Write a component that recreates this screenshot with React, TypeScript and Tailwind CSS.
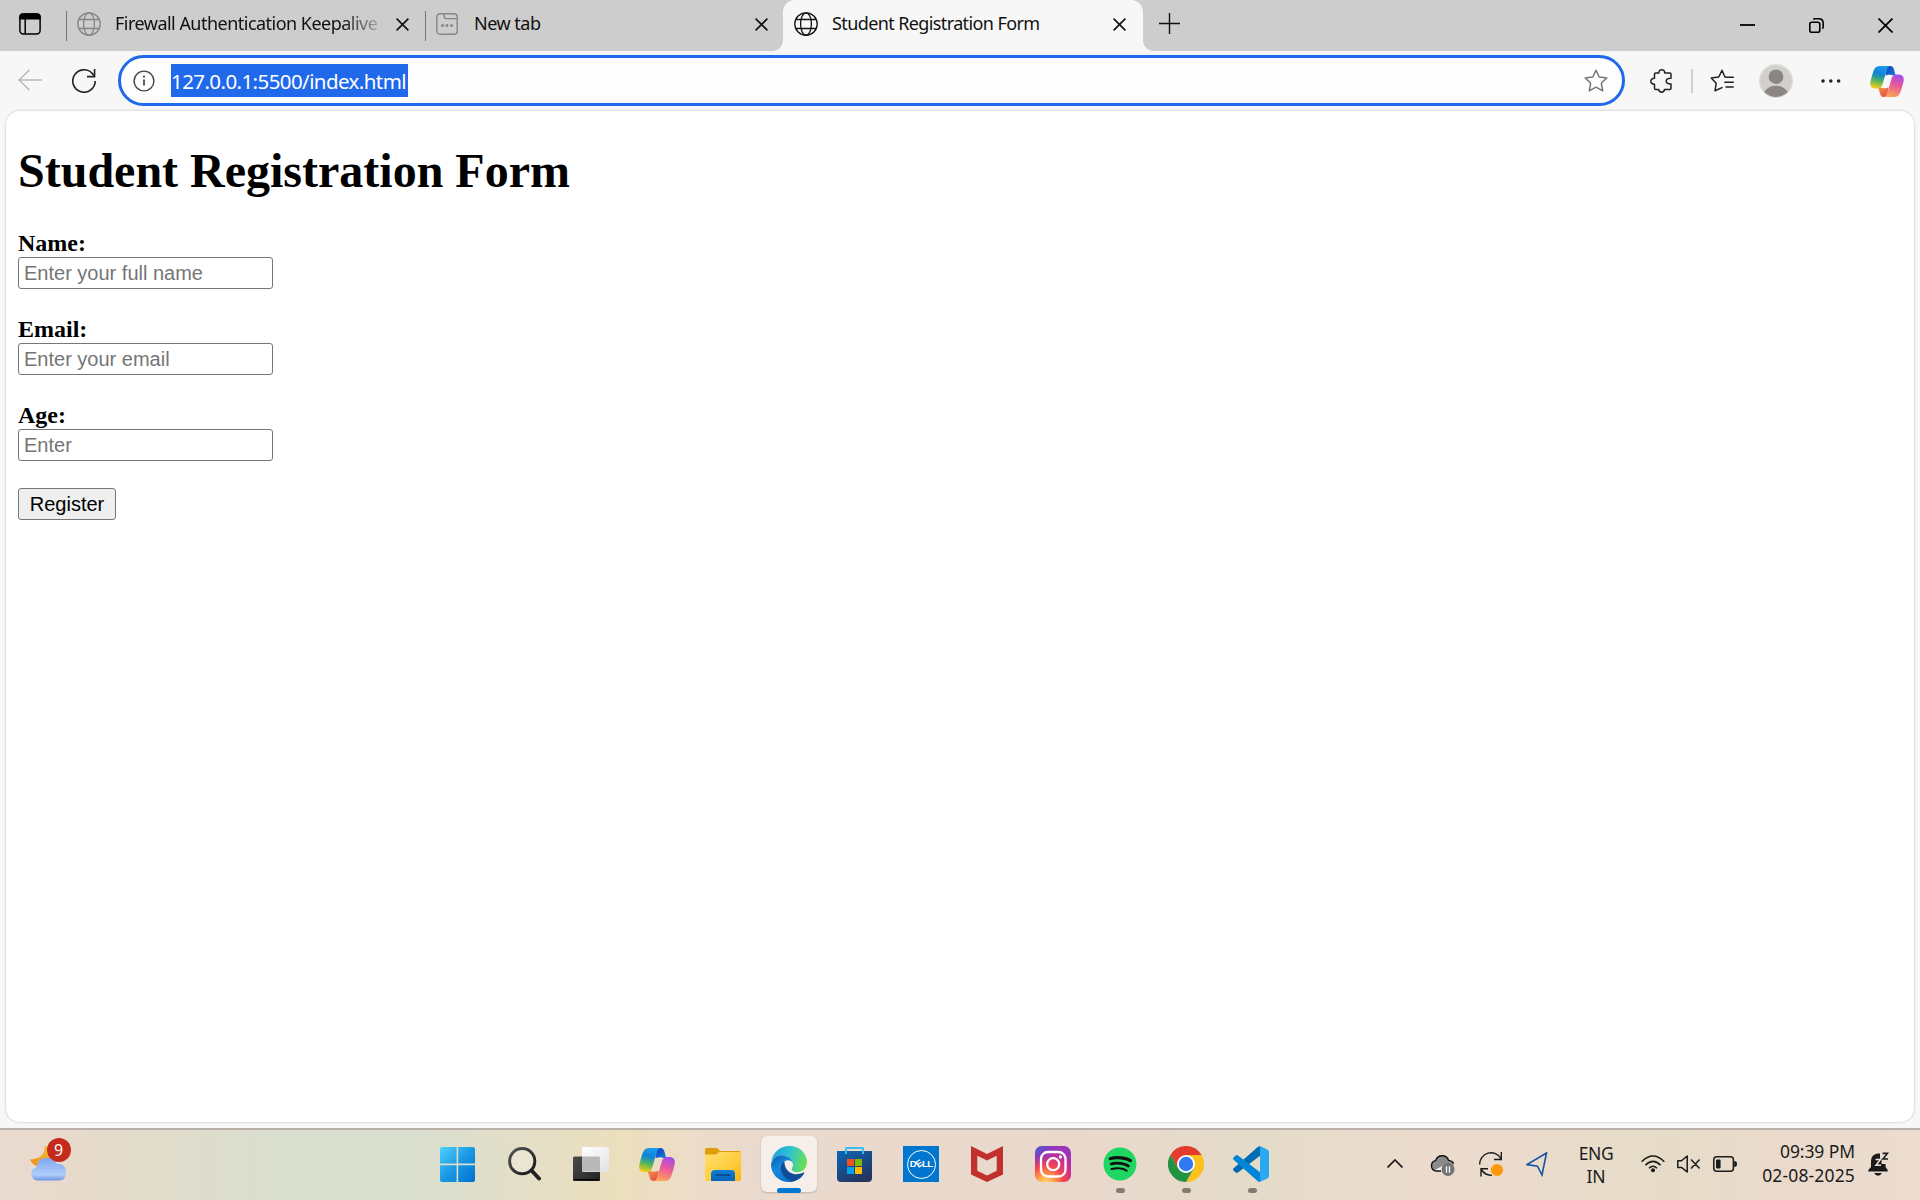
import React from "react";
import { FaSpotify } from "react-icons/fa";

type Cls = { className?: string };

const Globe = ({ className = "" }: Cls) => (
  <svg viewBox="0 0 24 24" className={"h-6 w-6 shrink-0 " + className} fill="none" stroke="currentColor" strokeWidth="1.3">
    <circle cx="12" cy="12" r="11.2" />
    <ellipse cx="12" cy="12" rx="5.4" ry="11.2" />
    <path d="M1.8 7.5H22.2M1.8 16.5H22.2" />
  </svg>
);

const Cross = ({ className = "" }: Cls) => (
  <svg viewBox="0 0 13 13" className={"h-[13px] w-[13px] shrink-0 " + className} fill="none" stroke="#111" strokeWidth="1.6">
    <path d="M.6 .6L12.4 12.4M12.4 .6L.6 12.4" />
  </svg>
);

const Copilot = ({ className = "", id }: Cls & { id: string }) => (
  <svg viewBox="0 0 36 33" className={"shrink-0 " + className}>
    <defs>
      <linearGradient id={id + "a"} x1="0.5" y1="0" x2="0.3" y2="1">
        <stop offset="0" stopColor="#1a9ae8" />
        <stop offset=".35" stopColor="#0f83d8" />
        <stop offset=".65" stopColor="#52b45f" />
        <stop offset="1" stopColor="#f8cf10" />
      </linearGradient>
      <linearGradient id={id + "b"} x1="0.7" y1="0" x2="0.4" y2="1">
        <stop offset="0" stopColor="#a04df0" />
        <stop offset=".45" stopColor="#e9579c" />
        <stop offset="1" stopColor="#ffa456" />
      </linearGradient>
      <linearGradient id={id + "c"} x1="0" y1="0" x2="1" y2="1">
        <stop offset="0" stopColor="#123bb8" />
        <stop offset="1" stopColor="#1783e8" />
      </linearGradient>
      <linearGradient id={id + "d"} x1="0" y1="0" x2="1" y2="1">
        <stop offset="0" stopColor="#f7a23b" />
        <stop offset="1" stopColor="#e43d52" />
      </linearGradient>
    </defs>
    <path d="M18 0H21.5C23.5 0 24.6 1 25.2 3L26.8 8.5C27.2 9.7 27.8 10 29 10H24.5Q22 8.8 19.5 9.4L16.4 10Z" fill={`url(#${id}c)`} />
    <path d="M18 33H14.5C12.5 33 11.4 32 10.8 30L9.2 25C8.8 23.6 8 23.2 6.5 23H11.5Q14 24.2 16.5 23.6L19.6 23Z" fill={`url(#${id}d)`} />
    <path d="M10.5 0H22C19.5 0 18.4 2 17.6 4.8L13.2 19.5C12.4 22.2 11 24 8 24H5.2C1 24 -.6 20.5 .4 16.5C1.4 12 2.6 8 4 4.3C5.2 1.4 7.4 0 10.5 0Z" fill={`url(#${id}a)`} />
    <path d="M25.5 33H14C16.5 33 17.6 31 18.4 28.2L22.8 13.5C23.6 10.8 25 9 28 9H30.8C35 9 36.6 12.5 35.6 16.5C34.6 21 33.4 25 32 28.7C30.8 31.6 28.6 33 25.5 33Z" fill={`url(#${id}b)`} />
  </svg>
);

const TabSep = ({ className = "" }: Cls) => <div className={"h-[30px] w-px shrink-0 bg-[#777] " + className} />;

function TabBar() {
  return (
    <div className="flex h-[51px] shrink-0 bg-[#cdcdcd] text-[18px] text-[#111]">
      <div className="flex h-[51px] w-[66px] pt-[13px] pl-[19px]">
        <svg viewBox="0 0 22 22" className="h-[22px] w-[22px]" fill="none" stroke="#000" strokeWidth="1.5">
          <rect x=".9" y=".9" width="20.2" height="20.2" rx="3.5" />
          <path d="M1 5.8V4Q1 1 4 1H18Q21 1 21 4V5.8Z" fill="#000" />
          <path d="M6.2 6V21" />
        </svg>
      </div>
      <TabSep className="mt-[11px]" />
      <div className="flex w-[358px] pl-[10px]">
        <Globe className="mt-3 text-[#858585]" />
        <span className="mt-[10px] ml-[14px] w-[266px] leading-[26px] tracking-[-0.52px] whitespace-nowrap [mask-image:linear-gradient(to_right,#000_228px,transparent_272px)]">
          Firewall Authentication Keepalive
        </span>
        <Cross className="mt-[18px] ml-[15px]" />
      </div>
      <TabSep className="mt-[11px]" />
      <div className="flex w-[357px] pl-[10px]">
        <svg viewBox="0 0 22 22" className="mt-[13px] h-[22px] w-[22px]" fill="none" stroke="#858585" strokeWidth="1.4">
          <rect x=".8" y=".8" width="20.4" height="20.4" rx="3.2" />
          <path d="M8.3 1V3.6Q8.3 5.6 10.3 5.6H21" />
          <g fill="#858585" stroke="none">
            <circle cx="6.5" cy="12.6" r="1.5" />
            <circle cx="11" cy="12.6" r="1.5" />
            <circle cx="15.5" cy="12.6" r="1.5" />
          </g>
        </svg>
        <span className="mt-[10px] ml-[16px] w-[281px] leading-[26px] tracking-[-0.5px]">New tab</span>
        <Cross className="mt-[18px]" />
      </div>
      <div className="relative flex w-[360px] rounded-t-[12px] bg-[#f7f7f7] pl-[11px]">
        <div className="absolute bottom-0 -left-[10px] h-[10px] w-[10px] bg-[radial-gradient(circle_at_0_0,transparent_9.5px,#f7f7f7_10px)]" />
        <div className="absolute -right-[10px] bottom-0 h-[10px] w-[10px] bg-[radial-gradient(circle_at_100%_0,transparent_9.5px,#f7f7f7_10px)]" />
        <Globe className="mt-3" />
        <span className="mt-[10px] ml-[14px] w-[281px] leading-[26px] tracking-[-0.61px]">Student Registration Form</span>
        <Cross className="mt-[18px]" />
      </div>
      <svg viewBox="0 0 22 22" className="mt-[13px] ml-4 h-[22px] w-[22px]" stroke="#111" strokeWidth="1.4">
        <path d="M0 10.5H21M10.5 0V21" />
      </svg>
      <div className="mt-[18px] ml-auto flex w-[180px] justify-between pr-[27px]">
        <svg viewBox="0 0 15 15" className="h-[15px] w-[15px]" stroke="#000" strokeWidth="1.8">
          <path d="M0 7H15" />
        </svg>
        <svg viewBox="0 0 15 15" className="h-[15px] w-[15px]" fill="none" stroke="#000" strokeWidth="1.6">
          <rect x=".8" y="4.2" width="10" height="10" rx="2" />
          <path d="M4.2 1.2Q5 .8 6 .8H9.6Q14.2 .8 14.2 5.4V8.6Q14.2 10 13.5 10.8" />
        </svg>
        <svg viewBox="0 0 15 15" className="h-[15px] w-[15px]" stroke="#000" strokeWidth="1.7">
          <path d="M.5 .5L14.5 14.5M14.5 .5L.5 14.5" />
        </svg>
      </div>
    </div>
  );
}

const STAR = "M12 1.2L15.2 8L22.8 9L17.3 14.2L18.7 21.8L12 18.2L5.3 21.8L6.7 14.2L1.2 9L8.8 8Z";

function Toolbar() {
  return (
    <div className="flex h-[59px] shrink-0 bg-[#f7f7f7] pl-[18px]">
      <svg viewBox="0 0 24 22" className="mt-[18px] h-[22px] w-6" fill="none" stroke="#b9b9b9" strokeWidth="1.4">
        <path d="M24 11H1M11.5 .8L1 11L11.5 21.2" />
      </svg>
      <svg viewBox="0 0 24 24" className="mt-[18px] ml-[30px] h-6 w-6" fill="none" stroke="#222" strokeWidth="1.6">
        <path d="M23.2 12A11.2 11.2 0 1 1 20.2 4.4L22.5 7" />
        <path d="M22.6 0V7.6H15" />
      </svg>
      <div className="mt-1 ml-[22px] flex h-[51px] w-[1507px] rounded-full border-[3px] border-[#2169eb] bg-[#fdfdfd]">
        <svg viewBox="0 0 22 22" className="mt-3 ml-3 h-[22px] w-[22px]" fill="none" stroke="#444" strokeWidth="1.4">
          <circle cx="11" cy="11" r="9.9" />
          <path d="M11 9.6V15.6" strokeWidth="1.7" />
          <circle cx="11" cy="6.7" r="1.1" fill="#444" stroke="none" />
        </svg>
        <span className="mt-[6px] ml-4 h-[33px] w-[237px] bg-[#2169eb] text-[20.5px] leading-[35px] tracking-[-0.58px] whitespace-nowrap text-white">
          127.0.0.1:5500/index.html
        </span>
        <svg viewBox="0 0 24 23" className="mt-[11px] mr-[14px] ml-auto h-[23px] w-6" fill="none" stroke="#777" strokeWidth="1.5" strokeLinejoin="round">
          <path d={STAR} />
        </svg>
      </div>
      <svg viewBox="0 0 22 24" className="mt-[18px] ml-[25px] h-6 w-[22px]" fill="none" stroke="#222" strokeWidth="1.5" strokeLinejoin="round">
        <path d="M4.5 5.2Q4.5 4 5.7 4H8.9Q8.9 .8 11.8 .8T14.7 4H19.8Q21 4 21 5.2V9.2Q16.2 9 16.2 12T21 15V19.2Q21 20.4 19.8 20.4H14.6Q14.2 23.2 11.6 23.2T8.7 20.4H5.7Q4.5 20.4 4.5 19.2V15.2Q.8 15.1 .8 12.3T4.5 9.2Z" />
      </svg>
      <div className="mt-[18px] ml-[19px] h-6 w-[2px] bg-[#cfcfcf]" />
      <svg viewBox="0 0 24 23" className="mt-[18px] ml-[17px] h-[23px] w-6" fill="none" stroke="#222" strokeWidth="1.5" strokeLinejoin="round" strokeLinecap="round">
        <path d="M16 8.3L14.8 7.8L12 1.2L8.8 8L1.2 9L6.2 14.2L5 21.8L12 18.6M16 8.3H23.3M14.8 13.2H23.3M16 18H23.3" />
      </svg>
      <svg viewBox="0 0 34 34" className="mt-[13px] ml-[25px] h-[34px] w-[34px]">
        <clipPath id="avatar">
          <circle cx="17" cy="17" r="16" />
        </clipPath>
        <circle cx="17" cy="17" r="17" fill="#dedcd9" />
        <circle cx="17" cy="17" r="15.7" fill="#d2d0cd" />
        <g clipPath="url(#avatar)" fill="#8b8684">
          <circle cx="17" cy="12.7" r="7.3" />
          <ellipse cx="17" cy="33" rx="13" ry="11.3" />
        </g>
      </svg>
      <svg viewBox="0 0 20 4" className="mt-[28px] ml-[28px] h-1 w-5" fill="#222">
        <circle cx="2" cy="2" r="1.8" />
        <circle cx="9.8" cy="2" r="1.8" />
        <circle cx="17.6" cy="2" r="1.8" />
      </svg>
      <Copilot id="tb" className="mt-[15px] ml-[29px] h-[31px] w-[34px]" />
    </div>
  );
}

function Field({ label, placeholder }: { label: string; placeholder: string }) {
  return (
    <label className="mb-[26px] block">
      <span className="block h-7 font-['Liberation_Serif',serif] text-[24px] leading-7 font-bold">{label}</span>
      <input
        placeholder={placeholder}
        className="block h-8 w-[255px] rounded-[3px] border border-[#767676] bg-white px-[5px] font-['Liberation_Sans',sans-serif] text-[20px] leading-[26px] placeholder:text-[#757575]"
      />
    </label>
  );
}

function PageContent() {
  return (
    <div className="min-h-0 flex-1 bg-[#f7f7f7] px-[6px] pt-px pb-[6px]">
      <div className="h-full rounded-[14px] bg-white pt-[32px] pl-3 text-black shadow-[0_0_2px_1px_rgba(0,0,0,0.11)]">
        <h1 className="h-[54px] font-['Liberation_Serif',serif] text-[48px] leading-[56px] font-bold">Student Registration Form</h1>
        <form className="mt-8">
          <Field label="Name:" placeholder="Enter your full name" />
          <Field label="Email:" placeholder="Enter your email" />
          <Field label="Age:" placeholder="Enter" />
          <button type="button" className="mt-[27px] block h-8 w-[98px] rounded-[3px] border border-[#767676] bg-[#efefef] font-['Liberation_Sans',sans-serif] text-[20px] leading-[29px]">
            Register
          </button>
        </form>
      </div>
    </div>
  );
}

const WindowsLogo = () => (
  <svg viewBox="0 0 35 35" className="h-[35px] w-[35px]">
    <linearGradient id="win" x1="0" y1="0" x2="1" y2="1">
      <stop offset="0" stopColor="#50d2ff" />
      <stop offset=".5" stopColor="#1b98e3" />
      <stop offset="1" stopColor="#0070d2" />
    </linearGradient>
    <path fill="url(#win)" d="M2 0H16.6V16.6H0V2Q0 0 2 0ZM18.2 0H33Q35 0 35 2V16.6H18.2ZM0 18.2H16.6V35H2Q0 35 0 33ZM18.2 18.2H35V33Q35 35 33 35H18.2Z" />
  </svg>
);

const SearchIcon = () => (
  <svg viewBox="0 0 34 34" className="ml-[3px] h-[34px] w-[34px]" fill="none">
    <linearGradient id="srch" x1="0" y1="0" x2="1" y2="1">
      <stop offset="0" stopColor="#555" />
      <stop offset="1" stopColor="#161616" />
    </linearGradient>
    <path d="M24 24L31 31.5" stroke="#222" strokeWidth="4" strokeLinecap="round" />
    <circle cx="14.2" cy="14.2" r="12.6" fill="#ffffff" fillOpacity=".22" stroke="url(#srch)" strokeWidth="3" />
  </svg>
);

const TaskView = () => (
  <svg viewBox="0 0 36 34" className="ml-[2px] h-[34px] w-9">
    <linearGradient id="tvd" x1="0" y1="0" x2="1" y2="1">
      <stop offset="0" stopColor="#4b4b4b" />
      <stop offset="1" stopColor="#222" />
    </linearGradient>
    <linearGradient id="tvl" x1="0" y1="0" x2="1" y2="1">
      <stop offset="0" stopColor="#fff" />
      <stop offset="1" stopColor="#e2e2e4" />
    </linearGradient>
    <rect x="0" y="9.5" width="27" height="24.5" rx="1.5" fill="url(#tvd)" />
    <path d="M.5 32.8H26.5" stroke="#000" strokeWidth="1.4" />
    <rect x="9" y="0" width="27" height="25" rx="1.5" fill="url(#tvl)" />
    <path d="M9 9.5H25.5Q27 9.5 27 11V24.5H9Z" fill="#b9b9b9" />
  </svg>
);

const Folder = () => (
  <svg viewBox="0 0 36 33" className="h-[33px] w-9">
    <linearGradient id="fld" x1="0" y1="0" x2="1" y2="1">
      <stop offset="0" stopColor="#ffdf70" />
      <stop offset=".6" stopColor="#ffcc3d" />
      <stop offset="1" stopColor="#fbb40c" />
    </linearGradient>
    <linearGradient id="fldb" x1="0" y1="0" x2="0" y2="1">
      <stop offset="0" stopColor="#0a7fd4" />
      <stop offset="1" stopColor="#0663b8" />
    </linearGradient>
    <path d="M0 8V1.6Q0 0 1.6 0H11Q12.4 0 13.4 1.2L15 3H34.4Q36 3 36 4.6V8Z" fill="#dd9e0a" />
    <path d="M0 6.4H9.5Q11.5 6.4 12.8 5.2L14 4H34.4Q36 4 36 5.6V31Q36 33 34 33H2Q0 33 0 31Z" fill="url(#fld)" />
    <path d="M6 33V26Q6 22 10 22H26Q30 22 30 26V33Z" fill="url(#fldb)" />
    <path d="M11.3 27.2H24.7" stroke="#064a8c" strokeWidth="1.8" strokeLinecap="round" />
  </svg>
);

const EdgeLogo = () => (
  <svg viewBox="0 0 36 36" className="h-9 w-9">
    <linearGradient id="eg1" x1="0" y1=".3" x2="1" y2=".5">
      <stop offset="0" stopColor="#1e9fe0" />
      <stop offset=".5" stopColor="#2fc3d0" />
      <stop offset="1" stopColor="#6be04e" />
    </linearGradient>
    <linearGradient id="eg2" x1="0" y1="0" x2=".6" y2="1">
      <stop offset="0" stopColor="#0c5cae" />
      <stop offset=".5" stopColor="#1488dc" />
      <stop offset="1" stopColor="#0c74cc" />
    </linearGradient>
    <path d="M.3 15.6C1.6 6.6 9 0 18 0C28.8 0 36 7.6 36 16C36 22.4 31.4 26.2 26 26.2C22.8 26.2 20.6 25 20.6 23.6C20.6 22.4 22 21.4 22 18.8C22 14 17.2 9.2 10.6 9.2C5.6 9.2 2.2 12 .3 15.6Z" fill="url(#eg1)" />
    <path d="M18 36C7.6 36 0 28 0 18.4C1.2 12.4 5.6 9.2 10.6 9.2C16.4 9.2 21.2 12.8 22 17.4C20.6 13.6 14 13.2 12 17.2C9.4 23 13.2 31.6 22.4 35.5Q20.2 36 18 36Z" fill="url(#eg2)" />
    <path d="M13.4 15.2C10.2 17.4 8.8 21.6 10.8 26.4C12.8 31.2 17.4 34.6 22.4 35.5C27.2 34.2 31 31.2 33.1 27.5C33.6 26.6 32.8 26.2 32.2 26.6C28.6 28.6 23.8 29 20 27C14.8 24.2 13.4 19.4 13.4 15.2Z" fill="#114a96" />
  </svg>
);

const StoreLogo = () => (
  <svg viewBox="0 0 35 35" className="h-[35px] w-[35px]">
    <linearGradient id="st" x1="0" y1="0" x2=".6" y2="1">
      <stop offset="0" stopColor="#0d67b8" />
      <stop offset="1" stopColor="#24355f" />
    </linearGradient>
    <path d="M0 4H35V31Q35 35 31 35H4Q0 35 0 31Z" fill="url(#st)" />
    <path d="M9 7V1H26V7" fill="none" stroke="#35c1f1" strokeWidth="1.9" strokeLinejoin="round" />
    <path d="M10 12H17V19H10Z" fill="#f25022" />
    <path d="M18 12H25V19H18Z" fill="#7fba00" />
    <path d="M10 20H17V27H10Z" fill="#00a4ef" />
    <path d="M18 20H25V27H18Z" fill="#ffb900" />
  </svg>
);

const DellLogo = () => (
  <div className="flex h-9 w-9 items-center justify-center bg-[#0076ce]">
    <div className="flex h-[29px] w-[29px] shrink-0 items-center justify-center rounded-full border-[1.5px] border-white font-['Liberation_Sans',sans-serif] text-[9.5px] leading-none font-bold tracking-[-0.5px] text-white">
      <span>D</span>
      <span className="-rotate-[35deg]">E</span>
      <span>LL</span>
    </div>
  </div>
);

const McAfee = () => (
  <svg viewBox="0 0 32 36" className="h-9 w-8">
    <path fillRule="evenodd" fill="#c1302c" d="M0 0L16 8L32 0V28.5L16 36L0 28.5ZM6.3 9.7V24.8L16 29.4L25.7 24.8V9.7L16 14.6Z" />
  </svg>
);

const Instagram = () => (
  <svg viewBox="0 0 36 36" className="h-9 w-9" fill="none">
    <radialGradient id="ig1" cx=".3" cy="1.05" r="1">
      <stop offset="0" stopColor="#ffdc7a" />
      <stop offset=".2" stopColor="#ffb04a" />
      <stop offset=".5" stopColor="#f4464d" />
      <stop offset=".8" stopColor="#c42e9c" />
      <stop offset="1" stopColor="#9a35b8" />
    </radialGradient>
    <radialGradient id="ig2" cx="0" cy="0" r=".6">
      <stop offset="0" stopColor="#3f66d8" />
      <stop offset="1" stopColor="#5a3ad0" stopOpacity="0" />
    </radialGradient>
    <rect width="36" height="36" rx="7" fill="url(#ig1)" />
    <rect width="36" height="36" rx="7" fill="url(#ig2)" />
    <g stroke="#fff" strokeWidth="2.3">
      <rect x="6" y="6" width="24.5" height="24.5" rx="7" />
      <circle cx="18.2" cy="18.2" r="6" />
    </g>
    <circle cx="25.4" cy="11" r="1.7" fill="#fff" />
  </svg>
);

const Spotify = () => (
  <div className="rounded-full bg-[radial-gradient(circle,#101010_60%,transparent_61%)]">
    <FaSpotify className="h-[34px] w-[34px] text-[#1ed760]" />
  </div>
);

const Chrome = () => (
  <svg viewBox="0 0 36 36" className="h-9 w-9">
    <path d="M2.4 9A18 18 0 0 1 33.6 9H18L10.2 22.5Z" fill="#e33b2e" />
    <path d="M33.6 9A18 18 0 0 1 18 36L25.8 22.5L18 9Z" fill="#fcc21b" />
    <path d="M18 36A18 18 0 0 1 2.4 9L10.2 22.5H25.8Z" fill="#229342" />
    <circle cx="18" cy="18" r="9" fill="#fff" />
    <circle cx="18" cy="18" r="7.2" fill="#3079ee" />
  </svg>
);

const VSCode = () => (
  <svg viewBox="0 0 36 36" className="mr-[2px] h-9 w-9">
    <path d="M27 .2V9.8L5 26.6Q3.8 27.4 2.7 26.6L.6 24.8Q-.5 23.5 .6 22.3L24.8 1Q25.6 .2 27 .2Z" fill="#006cb4" />
    <path d="M5 9.4L27 26.2V35.8Q25.6 36 24.8 35.2L.6 13.7Q-.5 12.5 .6 11.2L2.7 9.4Q3.8 8.6 5 9.4Z" fill="#0285d6" />
    <path d="M27 0L34.6 3.7Q36 4.4 36 6V30Q36 31.6 34.6 32.3L27 36Z" fill="#28a9f1" />
  </svg>
);

function Slot({ children, state }: { children: React.ReactNode; state?: "active" | "running" }) {
  return (
    <div className="relative flex h-[70px] w-[66.2px] items-center justify-center">
      <div
        className={
          state === "active"
            ? "mt-[-2px] flex h-14 w-14 items-center justify-center rounded-[6px] bg-[#f6eee9] shadow-[0_1px_2px_rgba(0,0,0,0.18)]"
            : "mt-[-2px] flex h-14 w-14 items-center justify-center"
        }
      >
        {children}
      </div>
      {state === "active" && <div className="absolute bottom-[7px] left-[21px] h-[5px] w-6 rounded-full bg-[#0078d4]" />}
      {state === "running" && <div className="absolute bottom-[7px] left-[29px] h-[5px] w-[9px] rounded-full bg-[#857b73]" />}
    </div>
  );
}

const Weather = () => (
  <div className="relative mt-[8px] ml-[30px] h-[44px] w-[42px]">
    <svg viewBox="0 0 42 44" className="h-[44px] w-[42px]">
      <linearGradient id="moon" x1="0" y1="1" x2="1" y2="0">
        <stop offset="0" stopColor="#ef8a1c" />
        <stop offset="1" stopColor="#f8c73a" />
      </linearGradient>
      <linearGradient id="cloud" x1="0" y1="0" x2="0" y2="1">
        <stop offset="0" stopColor="#7ea6ec" />
        <stop offset=".75" stopColor="#b0cdfb" />
        <stop offset="1" stopColor="#6d93e2" />
      </linearGradient>
      <path d="M14.5 8Q15.5 20.5 0 21.5Q3 29 12 29L26 20V10Z" fill="url(#moon)" />
      <path d="M7 42.5A6.8 6.8 0 0 1 6.4 29.2Q8 19.8 17 19.8Q24 19.8 26.5 25.8Q36 25 36 34.4Q36 42.5 28.5 42.5Z" fill="url(#cloud)" />
    </svg>
    <div className="absolute top-0 left-[16.5px] flex h-[24px] w-[24px] items-center justify-center rounded-full bg-[#c42b1c] text-[16px] leading-none text-white">9</div>
  </div>
);

function Tray() {
  return (
    <div className="flex text-[17.5px] leading-6 text-[#1b1b1b]">
      <svg viewBox="0 0 16 9" className="mt-[29px] h-[9px] w-4" fill="none" stroke="#1b1b1b" strokeWidth="1.7">
        <path d="M.5 8.5L8 1L15.5 8.5" />
      </svg>
      <svg viewBox="0 0 25 21" className="mt-[25px] ml-[27px] h-[21px] w-[25px]">
        <path d="M6 16A5.3 5.3 0 0 1 5.6 5.6Q7.4 .8 12.2 .8Q17 .8 18.6 5.4Q23.8 6 23.8 11L12 16Z" fill="#8b8b8b" />
        <path d="M4 15.5L17 8.5V16H7Z" fill="#f4f4f4" />
        <path d="M11 16H6A5.3 5.3 0 0 1 5.6 5.6Q7.4 .8 12.2 .8Q17 .8 18.6 5.4Q22.6 5.8 23.6 8.6" fill="none" stroke="#111" strokeWidth="1.4" />
        <circle cx="18" cy="14.5" r="6.5" fill="#717375" />
        <path d="M16.5 11.3V17.7M19.5 11.3V17.7" stroke="#fff" strokeWidth="1.3" />
      </svg>
      <svg viewBox="0 0 25 25" className="mt-[22px] ml-6 h-[25px] w-[25px]" fill="none" stroke="#1b1b1b" strokeWidth="1.4">
        <path d="M.7 12.5A11.3 11.3 0 0 1 22 6.8M22.3 0V7.5H15" />
        <path d="M2 24.5V16.8H9M2.2 17.5Q6 23.4 13 23.4" />
        <circle cx="18" cy="18" r="6.1" fill="#ff9808" stroke="none" />
      </svg>
      <svg viewBox="0 0 22 25" className="mt-[22px] ml-[22px] h-[25px] w-[22px]" fill="none" stroke="#1552a5" strokeWidth="1.6">
        <path d="M20.5 1L1 12.6L11.5 14.2L16 23Z" />
      </svg>
      <div className="mt-[12px] ml-[24px] w-[48px] text-center leading-[22.5px]">
        <div className="tracking-[-0.4px]">ENG</div>
        <div>IN</div>
      </div>
      <svg viewBox="0 0 24 18" className="mt-[25px] ml-[21px] h-[18px] w-6" fill="none" stroke="#1b1b1b" strokeWidth="1.5">
        <path d="M.7 6.7Q12 -4.8 23.3 6.7M4.4 10.2Q12 2.6 19.6 10.2M8 13.2Q12 9.4 16 13.2" />
        <circle cx="12" cy="15.2" r="2" fill="#1b1b1b" stroke="none" />
      </svg>
      <svg viewBox="0 0 24 18" className="mt-[25px] ml-3 h-[18px] w-6" fill="none" stroke="#1b1b1b" strokeWidth="1.5" strokeLinejoin="round">
        <path d="M.8 5.8H4.5L10.2 1V17L4.5 12.4H.8ZM14 4.6L22.6 13.4M22.6 4.6L14 13.4" />
      </svg>
      <svg viewBox="0 0 24 16" className="mt-[26px] ml-3 h-4 w-6" fill="none" stroke="#1b1b1b" strokeWidth="1.5">
        <rect x=".8" y=".8" width="19.6" height="14.4" rx="3" />
        <rect x="3" y="3.6" width="4.6" height="8.8" rx=".8" fill="#1b1b1b" stroke="none" />
        <path d="M21.2 5Q24 5 24 8T21.2 11Z" fill="#1b1b1b" stroke="none" />
      </svg>
      <div className="mt-[9px] w-[118px] text-right whitespace-nowrap">
        <div className="tracking-[-0.1px]">09:39 PM</div>
        <div className="tracking-[0.15px]">02-08-2025</div>
      </div>
      <svg viewBox="0 0 22 24" className="mt-[22px] mr-[30px] ml-[13px] h-6 w-[22px]">
        <path d="M9.5 1.6Q3 3 3 9V15L.3 18V19.5H19.7V18L17.6 15V12H7.5V7H12V1.6Z" fill="#1b1b1b" />
        <path d="M6.2 21H13.8Q12.6 23.8 10 23.8T6.2 21Z" fill="#1b1b1b" />
        <path d="M7 6.8H13.6V14H7Z" fill="#1b1b1b" />
        <path d="M7.6 7.4H12.4L8 13.2H13" fill="none" stroke="#efe4d8" strokeWidth="1.5" />
        <path d="M14.6 1.4H19.4L15 7H20" fill="none" stroke="#1b1b1b" strokeWidth="1.6" />
      </svg>
    </div>
  );
}

function Taskbar() {
  return (
    <div className="flex h-[72px] shrink-0 justify-between border-t-2 border-[#b9b1a9] bg-[linear-gradient(to_right,#eadacf_0,#e7dacb_80px,#e0dccb_170px,#dadece_260px,#dadece_430px,#e7dfc3_560px,#ebdfbc_620px,#ecddc8_690px,#ead9cd_750px,#e9d9cd_1080px,#e5dbc9_1250px,#ebdbcc_1430px,#ebdbcc_1530px,#e6dcc8_1640px,#eadacb_1780px,#ecdccf_1920px)]">
      <div className="w-[424.7px]">
        <Weather />
      </div>
      <div className="flex">
        <Slot><WindowsLogo /></Slot>
        <Slot><SearchIcon /></Slot>
        <Slot><TaskView /></Slot>
        <Slot><Copilot id="tk" className="ml-px h-[33px] w-9" /></Slot>
        <Slot><Folder /></Slot>
        <Slot state="active"><EdgeLogo /></Slot>
        <Slot><StoreLogo /></Slot>
        <Slot><DellLogo /></Slot>
        <Slot><McAfee /></Slot>
        <Slot><Instagram /></Slot>
        <Slot state="running"><Spotify /></Slot>
        <Slot state="running"><Chrome /></Slot>
        <Slot state="running"><VSCode /></Slot>
      </div>
      <div className="ml-auto">
        <Tray />
      </div>
    </div>
  );
}

export default function App() {
  return (
    <div className="flex h-[1200px] w-[1920px] flex-col overflow-hidden bg-[#f7f7f7] font-['Noto_Sans','Open_Sans',sans-serif]">
      <TabBar />
      <Toolbar />
      <PageContent />
      <Taskbar />
    </div>
  );
}
